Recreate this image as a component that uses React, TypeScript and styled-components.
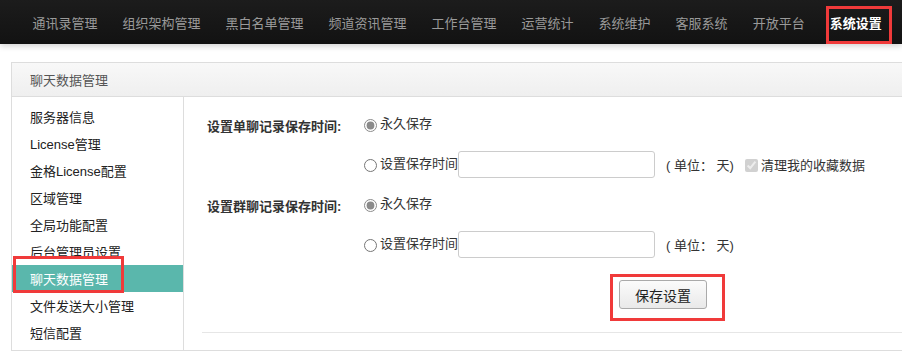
import * as React from 'react';
import styled, { createGlobalStyle } from 'styled-components';

const GlobalStyle = createGlobalStyle`
  html, body {
    margin: 0;
    padding: 0;
    background: #fff;
    overflow: hidden;
    font-family: "Liberation Sans", "Noto Sans CJK SC", sans-serif;
    font-size: 13px;
    color: #222;
  }
`;

const navItems = ['通讯录管理', '组织架构管理', '黑白名单管理', '频道资讯管理', '工作台管理', '运营统计', '系统维护', '客服系统', '开放平台', '系统设置'];

const menuItems = ['服务器信息', 'License管理', '金格License配置', '区域管理', '全局功能配置', '后台管理员设置', '聊天数据管理', '文件发送大小管理', '短信配置'];

const Page = styled.div`
  height: 351px;
  display: flex;
  flex-direction: column;
`;

const TopNav = styled.div`
  height: 44px;
  background: linear-gradient(#1c1c1c, #121212);
  box-shadow: 0 2px 6px rgba(0, 0, 0, 0.18);
  display: flex;
  align-items: center;
  padding: 3px 0 0 20px;
  box-sizing: border-box;
  flex-shrink: 0;
  position: relative;
  z-index: 1;
`;

const NavItem = styled.div<{ $active?: boolean }>`
  position: relative;
  padding: 0 12.5px;
  font-size: 13px;
  line-height: 19px;
  color: ${p => (p.$active ? '#fff' : '#9a9a9a')};
  font-weight: ${p => (p.$active ? 'bold' : 'normal')};
  white-space: nowrap;
`;

const Mark = styled.span<{ $l: number; $t: number; $w: number; $h: number }>`
  position: absolute;
  left: ${p => p.$l}px;
  top: ${p => p.$t}px;
  width: ${p => p.$w}px;
  height: ${p => p.$h}px;
  border: 3px solid #f03a3a;
  box-sizing: border-box;
  pointer-events: none;
  z-index: 2;
`;

const Panel = styled.div`
  margin: 18px -20px 0 11px;
  border: 1px solid #ddd;
  flex: 1;
  display: flex;
  flex-direction: column;
`;

const PanelHead = styled.div`
  height: 33px;
  background: linear-gradient(#f8f8f8, #efefef);
  border-bottom: 1px solid #ddd;
  display: flex;
  align-items: center;
  padding-left: 18px;
  color: #555;
  font-size: 13px;
`;

const PanelBody = styled.div`
  flex: 1;
  display: flex;
`;

const Sidebar = styled.div`
  width: 171px;
  border-right: 1px solid #ddd;
  padding-top: 6px;
`;

const MenuItem = styled.div<{ $active?: boolean }>`
  position: relative;
  height: 27px;
  display: flex;
  align-items: center;
  padding-left: 18px;
  font-size: 13px;
  color: ${p => (p.$active ? '#fff' : '#222')};
  background: ${p => (p.$active ? '#5ab7ac' : 'transparent')};
`;

const Content = styled.div`
  flex: 1;
  padding: 7px 0 0 18px;
`;

const FormGrid = styled.div`
  display: grid;
  grid-template-columns: 157px 1fr;
`;

const FieldLabel = styled.div`
  height: 40px;
  display: flex;
  align-items: center;
  padding: 3px 0 0 5px;
  box-sizing: border-box;
  font-weight: bold;
  font-size: 13px;
  color: #333;
`;

const Options = styled.div`
  display: flex;
  flex-direction: column;
`;

const OptionLine = styled.label`
  height: 40px;
  display: flex;
  align-items: center;
  font-size: 13px;
  color: #333;
`;

const Radio = styled.input`
  margin: 3px 3px 0 5px;
  accent-color: #8a8a8a;
`;

const RaisedText = styled.span`
  position: relative;
  top: -2px;
`;

const DaysInput = styled.input`
  width: 197px;
  height: 27px;
  margin-left: 0;
  border: 1px solid #ccc;
  border-radius: 3px;
  box-sizing: border-box;
  padding: 0 6px;
  font-size: 13px;
`;

const Unit = styled.span`
  margin-left: 11px;
  color: #333;
`;

const Check = styled.input`
  margin: 2px 3px 0 11px;
`;

const ButtonRow = styled.div`
  display: flex;
  padding: 16px 0 0 417px;
`;

const SaveButton = styled.button`
  position: relative;
  width: 88px;
  height: 29px;
  background: linear-gradient(#fbfbfb, #e9e9e9);
  border: 1px solid #aaa;
  border-radius: 3px;
  font-family: inherit;
  font-size: 14px;
  color: #222;
`;

const Divider = styled.div`
  margin-top: 23px;
  border-top: 1px solid #e6e6e6;
`;

function SaveTimeGroup({ label, name, withClear }: { label: string; name: string; withClear?: boolean }) {
  return (
    <>
      <FieldLabel>{label}</FieldLabel>
      <Options>
        <OptionLine>
          <Radio type="radio" name={name} defaultChecked />
          <RaisedText>永久保存</RaisedText>
        </OptionLine>
        <OptionLine>
          <Radio type="radio" name={name} />
          <RaisedText>设置保存时间</RaisedText>
          <DaysInput type="text" />
          <Unit>( 单位： 天)</Unit>
          {withClear && (
            <>
              <Check type="checkbox" defaultChecked disabled />
              <span>清理我的收藏数据</span>
            </>
          )}
        </OptionLine>
      </Options>
    </>
  );
}

export default function App() {
  return (
    <Page>
      <GlobalStyle />
      <TopNav>
        {navItems.map((item, i) => {
          const active = i === navItems.length - 1;
          return (
            <NavItem key={item} $active={active}>
              {item}
              {active && <Mark $l={9} $t={-8} $w={66} $h={38} />}
            </NavItem>
          );
        })}
      </TopNav>
      <Panel>
        <PanelHead>聊天数据管理</PanelHead>
        <PanelBody>
          <Sidebar>
            {menuItems.map(item => {
              const active = item === '聊天数据管理';
              return (
                <MenuItem key={item} $active={active}>
                  {item}
                  {active && <Mark $l={1} $t={-9} $w={111} $h={37} />}
                </MenuItem>
              );
            })}
          </Sidebar>
          <Content>
            <FormGrid>
              <SaveTimeGroup label="设置单聊记录保存时间:" name="single" withClear />
              <SaveTimeGroup label="设置群聊记录保存时间:" name="group" />
            </FormGrid>
            <ButtonRow>
              <SaveButton type="button">
                保存设置
                <Mark $l={-10} $t={-7} $w={115} $h={47} />
              </SaveButton>
            </ButtonRow>
            <Divider />
          </Content>
        </PanelBody>
      </Panel>
    </Page>
  );
}
